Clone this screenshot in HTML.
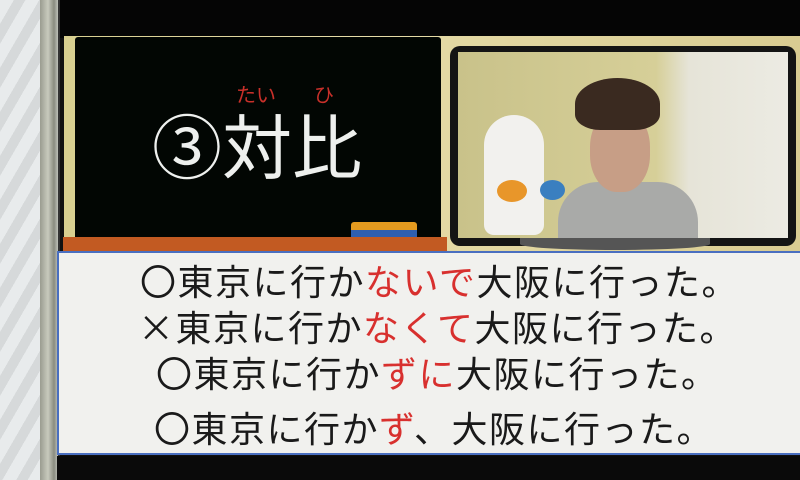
<!DOCTYPE html>
<html><head><meta charset="utf-8"><style>
*{margin:0;padding:0;box-sizing:border-box}
body{width:800px;height:480px;overflow:hidden;position:relative;background:#111;font-family:"Liberation Sans","Noto Sans CJK JP",sans-serif}
.abs{position:absolute}
.line{position:absolute;font-size:36px;line-height:40px;color:#1a1a1a;white-space:nowrap;letter-spacing:1.5px}
.r{color:#d8302e}
.cjk{font-family:"Noto Sans CJK JP",sans-serif}
</style></head><body>
<div class="abs" style="left:0;top:0;width:48px;height:480px;background:repeating-linear-gradient(120deg,#e8ebec 0 12px,#d6d9da 12px 22px)"></div>
<div class="abs" style="left:40px;top:0;width:20px;height:480px;background:linear-gradient(90deg,#9a9c90,#c8cabd 40%,#8a8c80 70%,#d9dcd6)"></div>
<div class="abs" style="left:58px;top:0;width:2px;height:480px;background:#333"></div>
<div class="abs" style="left:60px;top:0;width:740px;height:38px;background:#050505"></div>
<div class="abs" style="left:64px;top:36px;width:736px;height:218px;background:linear-gradient(90deg,#d8cf90,#e6dca8 40%,#d9cc92)"></div>
<div class="abs" style="left:75px;top:37px;width:366px;height:205px;background:#020603;border-radius:3px"></div>
<div class="abs cjk" style="left:152px;top:104px;font-size:70px;line-height:80px;color:#eef0ee;white-space:nowrap">③対比</div>
<div class="abs" style="left:236px;top:84px;font-size:20px;line-height:24px;color:#c9302a;white-space:nowrap">たい　<span style="margin-left:18px">ひ</span></div>
<div class="abs" style="left:351px;top:222px;width:66px;height:10px;background:#e49a1f;border-radius:3px 3px 0 0"></div>
<div class="abs" style="left:351px;top:230px;width:66px;height:11px;background:#2e5fb0"></div>
<div class="abs" style="left:63px;top:237px;width:384px;height:14px;background:#c25a22"></div>
<div class="abs" style="left:450px;top:46px;width:346px;height:200px;background:#141414;border-radius:10px"></div>
<div class="abs" style="left:458px;top:52px;width:330px;height:186px;background:linear-gradient(90deg,#c9c28a,#d6cf98 60%,#e6e4d8 70%,#ecebe3)"></div>
<div class="abs" style="left:484px;top:115px;width:60px;height:120px;background:#f2f1ee;border-radius:30px 30px 10px 10px"></div>
<div class="abs" style="left:497px;top:180px;width:30px;height:22px;background:#e8962a;border-radius:50%"></div>
<div class="abs" style="left:540px;top:180px;width:25px;height:20px;background:#3a7fc0;border-radius:50%"></div>
<div class="abs" style="left:558px;top:182px;width:140px;height:56px;background:#a9aaa8;border-radius:40px 40px 0 0"></div>
<div class="abs" style="left:590px;top:110px;width:60px;height:82px;background:#c79e86;border-radius:45%"></div>
<div class="abs" style="left:575px;top:78px;width:85px;height:52px;background:#3a2a20;border-radius:50% 50% 30% 30%"></div>
<div class="abs" style="left:520px;top:238px;width:190px;height:12px;background:#555;border-radius:0 0 50% 50%"></div>
<div class="abs" style="left:57px;top:251px;width:745px;height:204px;background:#f1f1ee;border:2px solid #4a6fc0"></div>
<div class="line" style="left:140px;top:263px">〇東京に行か<span class="r">ないで</span>大阪に行った。</div>
<div class="line" style="left:138px;top:306px"><span class="cjk">×</span>東京に行か<span class="r">なくて</span>大阪に行った。</div>
<div class="line" style="left:156px;top:355px">〇東京に行か<span class="r">ずに</span>大阪に行った。</div>
<div class="line" style="left:154px;top:410px">〇東京に行か<span class="r">ず</span>、大阪に行った。</div>
<div class="abs" style="left:57px;top:456px;width:743px;height:24px;background:#0a0a0a"></div>
</body></html>
